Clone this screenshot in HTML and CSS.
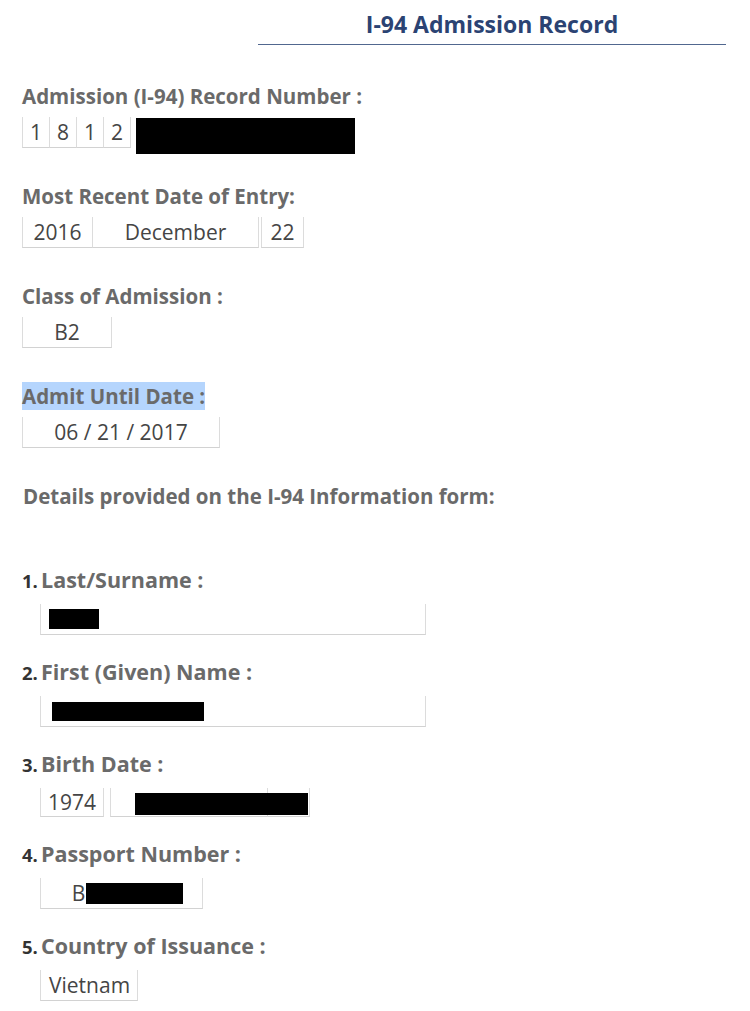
FILE: index.html
```html
<!DOCTYPE html>
<html>
<head>
<meta charset="utf-8">
<link rel="stylesheet" href="styles.css">
</head>
<body>
<div class="page">
  <div class="title-wrap"><h1 class="title">I-94 Admission Record</h1></div>

  <div class="field first">
    <div class="label">Admission (I-94) Record Number :</div>
    <div class="row">
      <div class="box digit">1</div>
      <div class="box digit">8</div>
      <div class="box digit">1</div>
      <div class="box digit last">2</div>
      <div class="redact rec"></div>
    </div>
  </div>

  <div class="field">
    <div class="label">Most Recent Date of Entry:</div>
    <div class="row">
      <div class="box year">2016</div>
      <div class="box month">December</div>
      <div class="box day">22</div>
    </div>
  </div>

  <div class="field">
    <div class="label">Class of Admission :</div>
    <div class="row">
      <div class="box cls">B2</div>
    </div>
  </div>

  <div class="field">
    <div class="label"><span class="hl">Admit Until Date :</span></div>
    <div class="row">
      <div class="box until">06 / 21 / 2017</div>
    </div>
  </div>

  <div class="label details">Details provided on the I-94 Information form:</div>

  <div class="nfield">
    <div class="label"><span class="num">1.</span>Last/Surname :</div>
    <div class="nrow">
      <div class="box wide"><div class="redact last-name"></div></div>
    </div>
  </div>

  <div class="nfield">
    <div class="label"><span class="num">2.</span>First (Given) Name :</div>
    <div class="nrow">
      <div class="box wide"><div class="redact first-name"></div></div>
    </div>
  </div>

  <div class="nfield">
    <div class="label"><span class="num">3.</span>Birth Date :</div>
    <div class="nrow birth">
      <div class="box byear">1974</div>
      <div class="box bmonth"></div>
      <div class="box bday"></div>
      <div class="redact birth-cover"></div>
    </div>
  </div>

  <div class="nfield">
    <div class="label"><span class="num">4.</span>Passport Number :</div>
    <div class="nrow">
      <div class="box passport">B<span class="redact pass"></span></div>
    </div>
  </div>

  <div class="nfield">
    <div class="label"><span class="num">5.</span>Country of Issuance :</div>
    <div class="nrow">
      <div class="box country">Vietnam</div>
    </div>
  </div>
</div>
</body>
</html>
```

FILE: styles.css
```css
* { box-sizing: border-box; }
html, body { margin: 0; padding: 0; background: #ffffff; }
body { font-family: "Open Sans", "Liberation Sans", sans-serif; }

.page { width: 750px; height: 1011px; overflow: hidden; padding-top: 8px; }

.title-wrap {
  margin-left: 258px;
  width: 468px;
  border-bottom: 1px solid #51678f;
  padding-bottom: 4px;
  text-align: center;
}
.title {
  margin: 0;
  font-size: 23px;
  line-height: 32px;
  font-weight: 700;
  color: #2b4373;
}

.label {
  font-size: 20.5px;
  line-height: 28px;
  height: 28px;
  font-weight: 700;
  color: #6a6a6a;
  white-space: nowrap;
}
.hl { background: #b5d5fd; }

.field { margin-left: 22px; margin-bottom: 34px; }
.field.first { margin-top: 37px; }
.field .label { margin-bottom: 7px; }

.row { display: flex; align-items: flex-start; }

.box {
  height: 31px;
  line-height: 30px;
  font-size: 21px;
  color: #454545;
  background: #fff;
  border-left: 1px solid #dcdcdc;
  border-right: 1px solid #dcdcdc;
  border-bottom: 1px solid #d2d2d2;
  text-align: center;
  white-space: nowrap;
}
.digit { width: 27px; border-right: none; }
.digit.last { width: 28px; border-right: 1px solid #dcdcdc; }
.year { width: 70px; border-right: none; }
.month { width: 167px; }
.day { width: 43px; margin-left: 2px; border-left: 1px solid #dcdcdc; }
.cls { width: 90px; }
.until { width: 198px; }

.redact { background: #000; }
.redact.rec { width: 219px; height: 36px; margin-left: 5px; margin-top: 1px; margin-bottom: -6px; }

.details { margin-left: 23px; margin-bottom: 56px; }

.nfield { margin-bottom: 23px; }
.nfield .label { margin-left: 22px; margin-bottom: 10px; font-size: 21.5px; }
.num {
  display: inline-block;
  width: 19px;
  font-size: 18.5px;
  color: #333;
}
.nrow { display: flex; align-items: flex-start; margin-left: 40px; }

.box.wide {
  width: 386px;
  height: 31px;
  display: flex;
  align-items: center;
  padding-left: 8px;
}
.redact.last-name { width: 50px; height: 20px; }
.redact.first-name { width: 152px; height: 19px; margin-left: 3px; }

.birth { position: relative; margin-top: 2px; }
.birth .box { height: 29px; line-height: 28px; }
.byear { width: 64px; }
.bmonth { width: 157px; margin-left: 6px; border-right: none; }
.bday { width: 43px; }
.redact.birth-cover { position: absolute; left: 95px; top: 5px; width: 173px; height: 22px; }

.passport {
  width: 163px;
  display: flex;
  align-items: center;
  justify-content: center;
  padding-left: 12px;
}
.redact.pass { display: inline-block; width: 97px; height: 21px; margin-left: 1px; }

.country { padding: 0 7px 0 8px; }
```
